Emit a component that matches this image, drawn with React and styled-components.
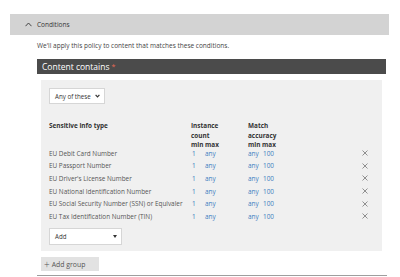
import React from 'react';
import styled, { createGlobalStyle } from 'styled-components';

const Global = createGlobalStyle`
  html, body {
    margin: 0;
    padding: 0;
    background: #ffffff;
    font-family: "Open Sans", "Noto Sans", sans-serif;
  }
`;

const Page = styled.div`
  width: 400px;
  height: 277px;
  overflow: hidden;
  padding-top: 14px;
  box-sizing: border-box;
  white-space: nowrap;
`;

const SectionHeader = styled.div`
  margin: 0 11px 0 10px;
  height: 21px;
  background: #d3d3d3;
  display: flex;
  align-items: center;
  padding-left: 15px;
  gap: 5px;
  font-size: 6.5px;
  color: #333;
`;

const Description = styled.div`
  margin: 6px 0 0 37px;
  font-size: 6.5px;
  line-height: 10px;
  color: #444;
`;

const Block = styled.div`
  margin: 8px 14px 0 37px;
`;

const DarkBar = styled.div`
  height: 15px;
  background: #4b4b4b;
  color: #fff;
  font-size: 8.5px;
  display: flex;
  align-items: center;
  padding-left: 5px;
`;

const Required = styled.span`
  color: #e86a55;
  margin-left: 2px;
  font-size: 7px;
`;

const Panel = styled.div`
  margin: 6px 4px 0 4px;
  background: #f0f0f0;
  padding: 8px 8px 7px 8px;
  height: 171px;
  box-sizing: border-box;
`;

const Select = styled.div`
  width: ${p => p.width}px;
  height: ${p => p.height}px;
  background: #fff;
  border: 1px solid #d6d6d6;
  box-sizing: border-box;
  display: flex;
  align-items: center;
  justify-content: space-between;
  padding: 0 4px 0 5px;
  font-size: 6.2px;
  color: #333;
`;

const Table = styled.div`
  display: grid;
  grid-template-columns: 142px 14px 43px 15px 1fr 12px;
  margin-top: 17px;
  font-size: 6.4px;
`;

const HeadCell = styled.div`
  grid-column: ${p => p.span};
  font-weight: 700;
  color: #333;
  line-height: 9.5px;
  margin-bottom: -2.5px;
`;

const Cell = styled.div`
  height: 12.6px;
  display: flex;
  align-items: center;
  color: ${p => (p.link ? '#3a7dc0' : '#555')};
  padding-left: ${p => p.indent || 0}px;
`;

const Remove = styled.div`
  height: 12.6px;
  display: flex;
  align-items: center;
`;

const Footer = styled.div`
  margin-top: 5px;
`;

const AddGroup = styled.div`
  margin: 6px 0 0 4px;
  width: 58px;
  height: 14px;
  background: #e2e2e2;
  display: flex;
  align-items: center;
  padding-left: 3px;
  gap: 2px;
  box-sizing: border-box;
  font-size: 6.9px;
  color: #555;
`;

const Plus = styled.span`
  font-size: 10px;
  font-weight: 300;
  line-height: 10px;
`;

const Rule = styled.div`
  margin: 4px 13px 0 37px;
  border-bottom: 1px solid #9e9e9e;
`;

const rows = [
  'EU Debit Card Number',
  'EU Passport Number',
  "EU Driver's License Number",
  'EU National Identification Number',
  'EU Social Security Number (SSN) or Equivaler',
  'EU Tax Identification Number (TIN)',
];

const Chevron = ({ up }) => (
  <svg width={up ? 7 : 5} height={up ? 5 : 4} viewBox={up ? '0 0 7 5' : '0 0 5 4'}>
    <path d={up ? 'M0.5 4.2 L3.5 1 L6.5 4.2' : 'M0.6 0.8 L2.5 2.9 L4.4 0.8'} fill="none" stroke="#333" strokeWidth={up ? 0.9 : 1.2} />
  </svg>
);

const Caret = () => (
  <svg width="4" height="3" viewBox="0 0 4 3">
    <path d="M0 0 L4 0 L2 3 Z" fill="#333" />
  </svg>
);

const Cross = () => (
  <svg width="6" height="6" viewBox="0 0 6 6">
    <path d="M0.5 0.5 L5.5 5.5 M5.5 0.5 L0.5 5.5" stroke="#777" strokeWidth="0.8" />
  </svg>
);

const App = () => (
  <Page>
    <Global />
    <SectionHeader>
      <Chevron up />
      <span>Conditions</span>
    </SectionHeader>
    <Description>We'll apply this policy to content that matches these conditions.</Description>
    <Block>
      <DarkBar>
        Content contains<Required>*</Required>
      </DarkBar>
      <Panel>
        <Select width={56} height={16}>
          <span>Any of these</span>
          <Chevron />
        </Select>
        <Table>
          <HeadCell span="1">Sensitive info type</HeadCell>
          <HeadCell span="2 / 4">Instance<br />count<br />min max</HeadCell>
          <HeadCell span="4 / 6">Match<br />accuracy<br />min max</HeadCell>
          <HeadCell span="6" />
          {rows.map(name => (
            <React.Fragment key={name}>
              <Cell>{name}</Cell>
              <Cell link indent={1}>1</Cell>
              <Cell link>any</Cell>
              <Cell link>any</Cell>
              <Cell link>100</Cell>
              <Remove><Cross /></Remove>
            </React.Fragment>
          ))}
        </Table>
        <Footer>
          <Select width={73} height={17}>
            <span>Add</span>
            <Caret />
          </Select>
        </Footer>
      </Panel>
      <AddGroup>
        <Plus>+</Plus>
        <span>Add group</span>
      </AddGroup>
    </Block>
    <Rule />
  </Page>
);

export default App;
